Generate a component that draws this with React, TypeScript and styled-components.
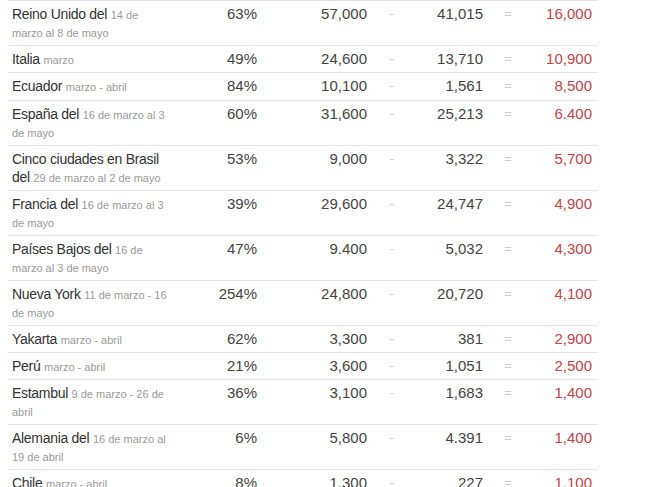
import React from 'react';
import styled, { createGlobalStyle } from 'styled-components';

const GlobalStyle = createGlobalStyle`
    html, body {
        margin: 0;
        padding: 0;
        background: #ffffff;
    }

    body {
        padding: 0 8px;
        font-family: "Liberation Sans", Arial, sans-serif;
        color: #333333;
    }
`;

type Row = {
    place: string;
    period: string;
    share: string;
    expected: string;
    reported: string;
    excess: string;
};

// line breaks follow the narrow place column of the original layout
const rows: Row[] = [
    { place: 'Reino Unido del', period: '14 de\nmarzo al 8 de mayo', share: '63%', expected: '57,000', reported: '41,015', excess: '16,000' },
    { place: 'Italia', period: 'marzo', share: '49%', expected: '24,600', reported: '13,710', excess: '10,900' },
    { place: 'Ecuador', period: 'marzo - abril', share: '84%', expected: '10,100', reported: '1,561', excess: '8,500' },
    { place: 'España del', period: '16 de marzo al 3\nde mayo', share: '60%', expected: '31,600', reported: '25,213', excess: '6.400' },
    { place: 'Cinco ciudades en Brasil\ndel', period: '29 de marzo al 2 de mayo', share: '53%', expected: '9,000', reported: '3,322', excess: '5,700' },
    { place: 'Francia del', period: '16 de marzo al 3\nde mayo', share: '39%', expected: '29,600', reported: '24,747', excess: '4,900' },
    { place: 'Países Bajos del', period: '16 de\nmarzo al 3 de mayo', share: '47%', expected: '9.400', reported: '5,032', excess: '4,300' },
    { place: 'Nueva York', period: '11 de marzo - 16\nde mayo', share: '254%', expected: '24,800', reported: '20,720', excess: '4,100' },
    { place: 'Yakarta', period: 'marzo - abril', share: '62%', expected: '3,300', reported: '381', excess: '2,900' },
    { place: 'Perú', period: 'marzo - abril', share: '21%', expected: '3,600', reported: '1,051', excess: '2,500' },
    { place: 'Estambul', period: '9 de marzo - 26 de\nabril', share: '36%', expected: '3,100', reported: '1,683', excess: '1,400' },
    { place: 'Alemania del', period: '16 de marzo al\n19 de abril', share: '6%', expected: '5,800', reported: '4.391', excess: '1,400' },
    { place: 'Chile', period: 'marzo - abril', share: '8%', expected: '1,300', reported: '227', excess: '1,100' },
];

const StyledTable = styled.div`
    width: 590px;
    display: flex;
    flex-direction: column;
`;

const StyledRow = styled.div<{ $tall?: boolean }>`
    display: grid;
    grid-template-columns: 186px 67px 110px 42px 74px 42px 69px;
    align-items: start;
    border-top: 1px solid #e2e2e2;
    padding: 4px 0 ${(p) => (p.$tall ? '5px' : '4px')};
    line-height: 18px;
`;

const StyledPlace = styled.div`
    padding: 0 8px 0 4px;
    font-size: 14px;
    letter-spacing: -0.3px;
    white-space: pre-line;
    color: #333333;
`;

const StyledPeriod = styled.span`
    font-size: 11px;
    line-height: 1;
    letter-spacing: 0;
    color: #9a9a9a;
`;

const StyledNumber = styled.div<{ $tone?: 'red' }>`
    padding-right: 4px;
    text-align: right;
    font-size: 15px;
    color: ${(p) => (p.$tone === 'red' ? '#c2444a' : '#444444')};

    &:last-child {
        padding-right: 6px;
    }
`;

const StyledSign = styled.div`
    text-align: center;
    font-size: 13px;
    color: #cccccc;
`;

export default function App() {
    return (
        <>
            <GlobalStyle />
            <StyledTable>
                {rows.map((row) => (
                    <StyledRow key={row.place} $tall={row.place === 'Ecuador'}>
                        <StyledPlace>
                            {row.place} <StyledPeriod>{row.period}</StyledPeriod>
                        </StyledPlace>
                        <StyledNumber>{row.share}</StyledNumber>
                        <StyledNumber>{row.expected}</StyledNumber>
                        <StyledSign>-</StyledSign>
                        <StyledNumber>{row.reported}</StyledNumber>
                        <StyledSign>=</StyledSign>
                        <StyledNumber $tone="red">{row.excess}</StyledNumber>
                    </StyledRow>
                ))}
            </StyledTable>
        </>
    );
}
